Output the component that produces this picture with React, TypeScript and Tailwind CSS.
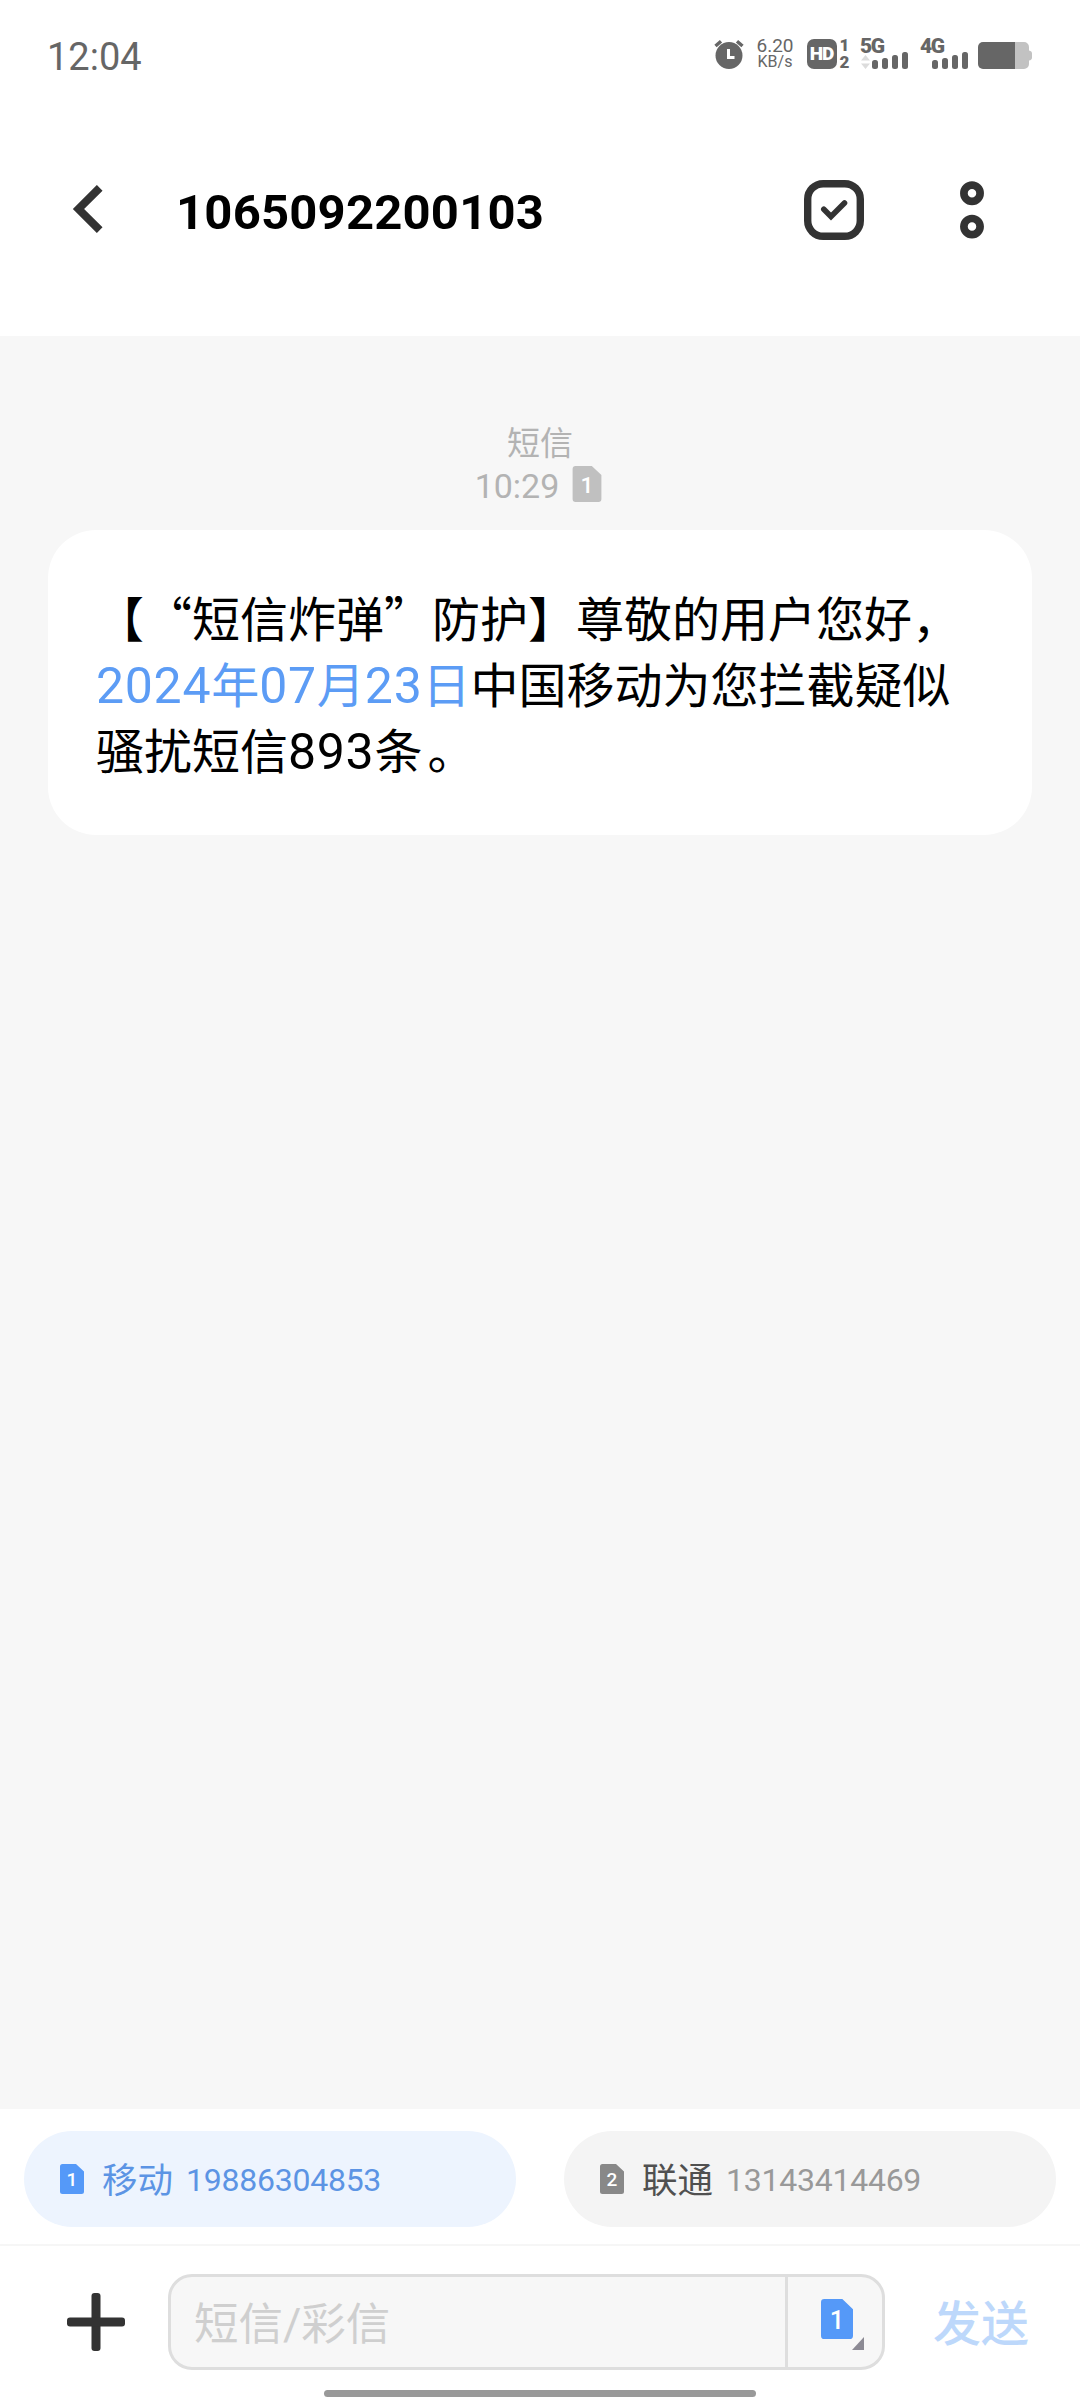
import { useState } from 'react';
import clsx from 'clsx';

interface SimCard {
  slot: number;
  carrier: string;
  phone: string;
}

const SIM_CARDS: SimCard[] = [
  { slot: 1, carrier: '移动', phone: '19886304853' },
  { slot: 2, carrier: '联通', phone: '13143414469' },
];

const SIGNAL_BARS = ['h-[9px]', 'h-[11px]', 'h-[14px]', 'h-[17px]'];

function SimIcon({ slot, className }: { slot: number; className?: string }) {
  return (
    <svg viewBox="0 0 24 30" className={clsx('shrink-0', className)} fill="currentColor">
      <path d="M2.5 0H16l8 7.6v19.9a2.5 2.5 0 0 1-2.5 2.5h-19A2.5 2.5 0 0 1 0 27.5v-25A2.5 2.5 0 0 1 2.5 0z" />
      <text x="12" y="22.2" textAnchor="middle" fontSize="19" fontWeight="500" fill="#fff" className="font-['Roboto',sans-serif]">
        {slot}
      </text>
    </svg>
  );
}

function Signal({ label, arrows }: { label: string; arrows?: boolean }) {
  return (
    <div className="relative h-[30px] w-[48px]">
      <span className="absolute left-0 top-0 text-[21px] leading-[15px] font-black tracking-[-1.5px]">{label}</span>
      {arrows && (
        <svg viewBox="0 0 9 14" className="absolute left-[1px] top-[16px] h-[14px] w-[9px]" fill="#dcdcdc">
          <path d="M4.5 0 9 5.5H0zM4.5 14 0 8.5h9z" />
        </svg>
      )}
      <div className="absolute bottom-0 right-0 flex items-end gap-[4px]">
        {SIGNAL_BARS.map((height) => (
          <span key={height} className={clsx('w-[6px] rounded-[2.5px] bg-[#666]', height)} />
        ))}
      </div>
    </div>
  );
}

function StatusBar() {
  return (
    <div className="flex h-[108px] items-center justify-between pl-[47px] pr-[48px] text-[#666]">
      <span className="mt-[6px] text-[38px] leading-none">12:04</span>
      <div className="flex items-center">
        {/* Alarm */}
        <svg viewBox="0 0 30 30" className="h-[30px] w-[30px]">
          <circle cx="15" cy="16.5" r="13.5" fill="#666" />
          <path d="M1.5 7 7 2.2M28.5 7 23 2.2" stroke="#666" strokeWidth="3.4" />
          <path d="M14.5 10v8.5h6" fill="none" stroke="#fff" strokeWidth="3" />
        </svg>
        <div className="ml-[12px] flex w-[38px] flex-col items-center">
          <span className="h-[15px] text-[19px] leading-[15px]">6.20</span>
          <span className="mt-[2px] h-[15px] text-[16px] leading-[14px]">KB/s</span>
        </div>
        <div className="ml-[13px] flex">
          <span className="flex h-[30px] w-[30px] items-center justify-center rounded-[7px] bg-[#666] pr-px text-[19px] leading-none font-black tracking-[-1px] text-white">
            HD
          </span>
          <div className="ml-[2px] flex w-[11px] flex-col items-center text-[17px] leading-[15px] font-black">
            <span className="h-[13px] leading-[13px]">1</span>
            <span className="mt-[3px]">2</span>
          </div>
        </div>
        <div className="ml-[10px]">
          <Signal label="5G" arrows />
        </div>
        <div className="ml-[12px]">
          <Signal label="4G" />
        </div>
        <svg viewBox="0 0 54 27" className="ml-[10px] mt-[2px] h-[27px] w-[54px]">
          <path d="M37 0h9a5 5 0 0 1 5 5v3.500q3 .5 3 3v4q0 2.500-3 3V22a5 5 0 0 1-5 5h-9z" fill="#c2c2c2" />
          <path d="M5 0h32v27H5a5 5 0 0 1-5-5V5a5 5 0 0 1 5-5z" fill="#666" />
        </svg>
      </div>
    </div>
  );
}

function Header({ title }: { title: string }) {
  return (
    <header className="flex h-[228px] items-center pb-[26px] pl-[72px] pr-[96px] text-[#333]">
      <button aria-label="返回">
        <svg viewBox="0 0 32 48" className="h-[48px] w-[32px]" fill="none" stroke="currentColor" strokeWidth="8">
          <path d="M27.700 2.800 6.500 24l21.200 21.200" />
        </svg>
      </button>
      <h1 className="ml-[72px] mt-[6px] flex-1 text-[49px] leading-none font-bold tracking-[0.2px] text-black">{title}</h1>
      <button aria-label="选择">
        <svg viewBox="0 0 60 60" className="mt-px h-[60px] w-[60px]" fill="none" stroke="currentColor">
          <rect x="3.7" y="3.7" width="52.6" height="52.6" rx="15.5" strokeWidth="7.4" />
          <path d="m19.800 29.300 7.200 7.200 13.500-13.500" strokeWidth="5.600" strokeLinecap="round" />
        </svg>
      </button>
      <button aria-label="更多" className="ml-[96px]">
        <svg viewBox="0 0 24 60" className="mt-px h-[60px] w-[24px]" fill="none" stroke="currentColor" strokeWidth="7.7">
          <circle cx="12" cy="13.3" r="8.1" />
          <circle cx="12" cy="46.6" r="8.1" />
        </svg>
      </button>
    </header>
  );
}

function Digits({ children }: { children: string }) {
  return <span className="font-['Roboto',sans-serif] text-[50px] leading-[0] tracking-[0.7px]">{children}</span>;
}

function MessageBubble() {
  return (
    <div className="mx-[48px] mt-[24px] h-[305px] rounded-[48px] bg-white px-[48px] pt-[53px] font-['Noto_Sans_CJK_SC',sans-serif] text-[48px] leading-[66px] whitespace-nowrap text-black [text-spacing-trim:space-all]">
      <p>【“短信炸弹”防护】尊敬的用户您好，</p>
      <p>
        <a className="text-[#5c9cf5]">
          <Digits>2024</Digits>年<Digits>07</Digits>月<Digits>23</Digits>日
        </a>
        中国移动为您拦截疑似
      </p>
      <p>
        骚扰短信<Digits>893</Digits>条<span className="ml-[5px]">。</span>
      </p>
    </div>
  );
}

export default function App() {
  const [activeSlot, setActiveSlot] = useState(1);

  return (
    <div className="flex h-[2400px] w-[1080px] flex-col overflow-hidden bg-white font-['Roboto','Noto_Sans_CJK_SC',sans-serif]">
      <StatusBar />
      <Header title="1065092200103" />

      <main className="flex-1 bg-[#f7f7f7] pt-[87px]">
        <div className="flex flex-col items-center text-[33px] leading-[42px] text-[#b3b3b3]">
          <span>短信</span>
          <div className="flex h-[41px] items-center gap-[13px] pr-[3px]">
            <span className="mt-[1px] text-[34px]">10:29</span>
            <SimIcon slot={1} className="mb-[3px] h-[36px] w-[30px] text-[#c0c0c0]" />
          </div>
        </div>
        <MessageBubble />
      </main>

      {/* SIM picker */}
      <div className="flex h-[137px] justify-between border-b-2 border-[#f6f6f6] px-[24px] pt-[22px]">
        {SIM_CARDS.map((sim) => {
          const active = sim.slot === activeSlot;
          return (
            <button
              key={sim.slot}
              onClick={() => setActiveSlot(sim.slot)}
              className={clsx(
                'flex h-[96px] w-[492px] items-center rounded-full pl-[36px]',
                active ? 'bg-[#edf4fe] text-[#5c94e4]' : 'bg-[#f4f4f4] text-[#999]'
              )}
            >
              <SimIcon slot={sim.slot} className={clsx('h-[30px] w-[24px]', active ? 'text-[#5599f8]' : 'text-[#888]')} />
              <span className={clsx('mt-[5px] ml-[18px] text-[35.5px]', !active && 'text-[#505050]')}>{sim.carrier}</span>
              <span className="mt-[2px] ml-[13px] text-[32px] tracking-[-0.25px]">{sim.phone}</span>
            </button>
          );
        })}
      </div>

      {/* Composer */}
      <div className="flex h-[144px] items-start pl-[67px] pt-[28px]">
        <button aria-label="添加" className="mt-[19px] text-[#333]">
          <svg viewBox="0 0 58 58" className="h-[58px] w-[58px]" fill="currentColor">
            <rect x="24.5" width="9" height="58" rx="3" />
            <rect y="24.5" width="58" height="9" rx="3" />
          </svg>
        </button>
        <div className="ml-[43px] flex h-[96px] w-[717px] rounded-[24px] border-3 border-[#dedede] bg-[#f7f7f7]">
          <div className="flex flex-1 items-center pt-[7px] pl-[23px] text-[44.5px] text-[#cfcfcf]">短信/彩信</div>
          <button className="relative flex w-[97px] items-center border-l-3 border-[#dedede] pl-[33px]">
            <SimIcon slot={activeSlot} className="mb-[7px] h-[40px] w-[32px] text-[#5599f8]" />
            <svg viewBox="0 0 12 13" className="absolute bottom-[17px] right-[18px] h-[13px] w-[12px]" fill="#8c8a94">
              <path d="M12 0v13H0z" />
            </svg>
          </button>
        </div>
        <button className="ml-[48px] h-[96px] pt-[6px] text-[48px] font-medium text-[#bdd8fb]">发送</button>
      </div>

      <div className="flex h-[10px] justify-center">
        <div className="h-[7px] w-[432px] rounded-full bg-[#999]" />
      </div>
    </div>
  );
}
